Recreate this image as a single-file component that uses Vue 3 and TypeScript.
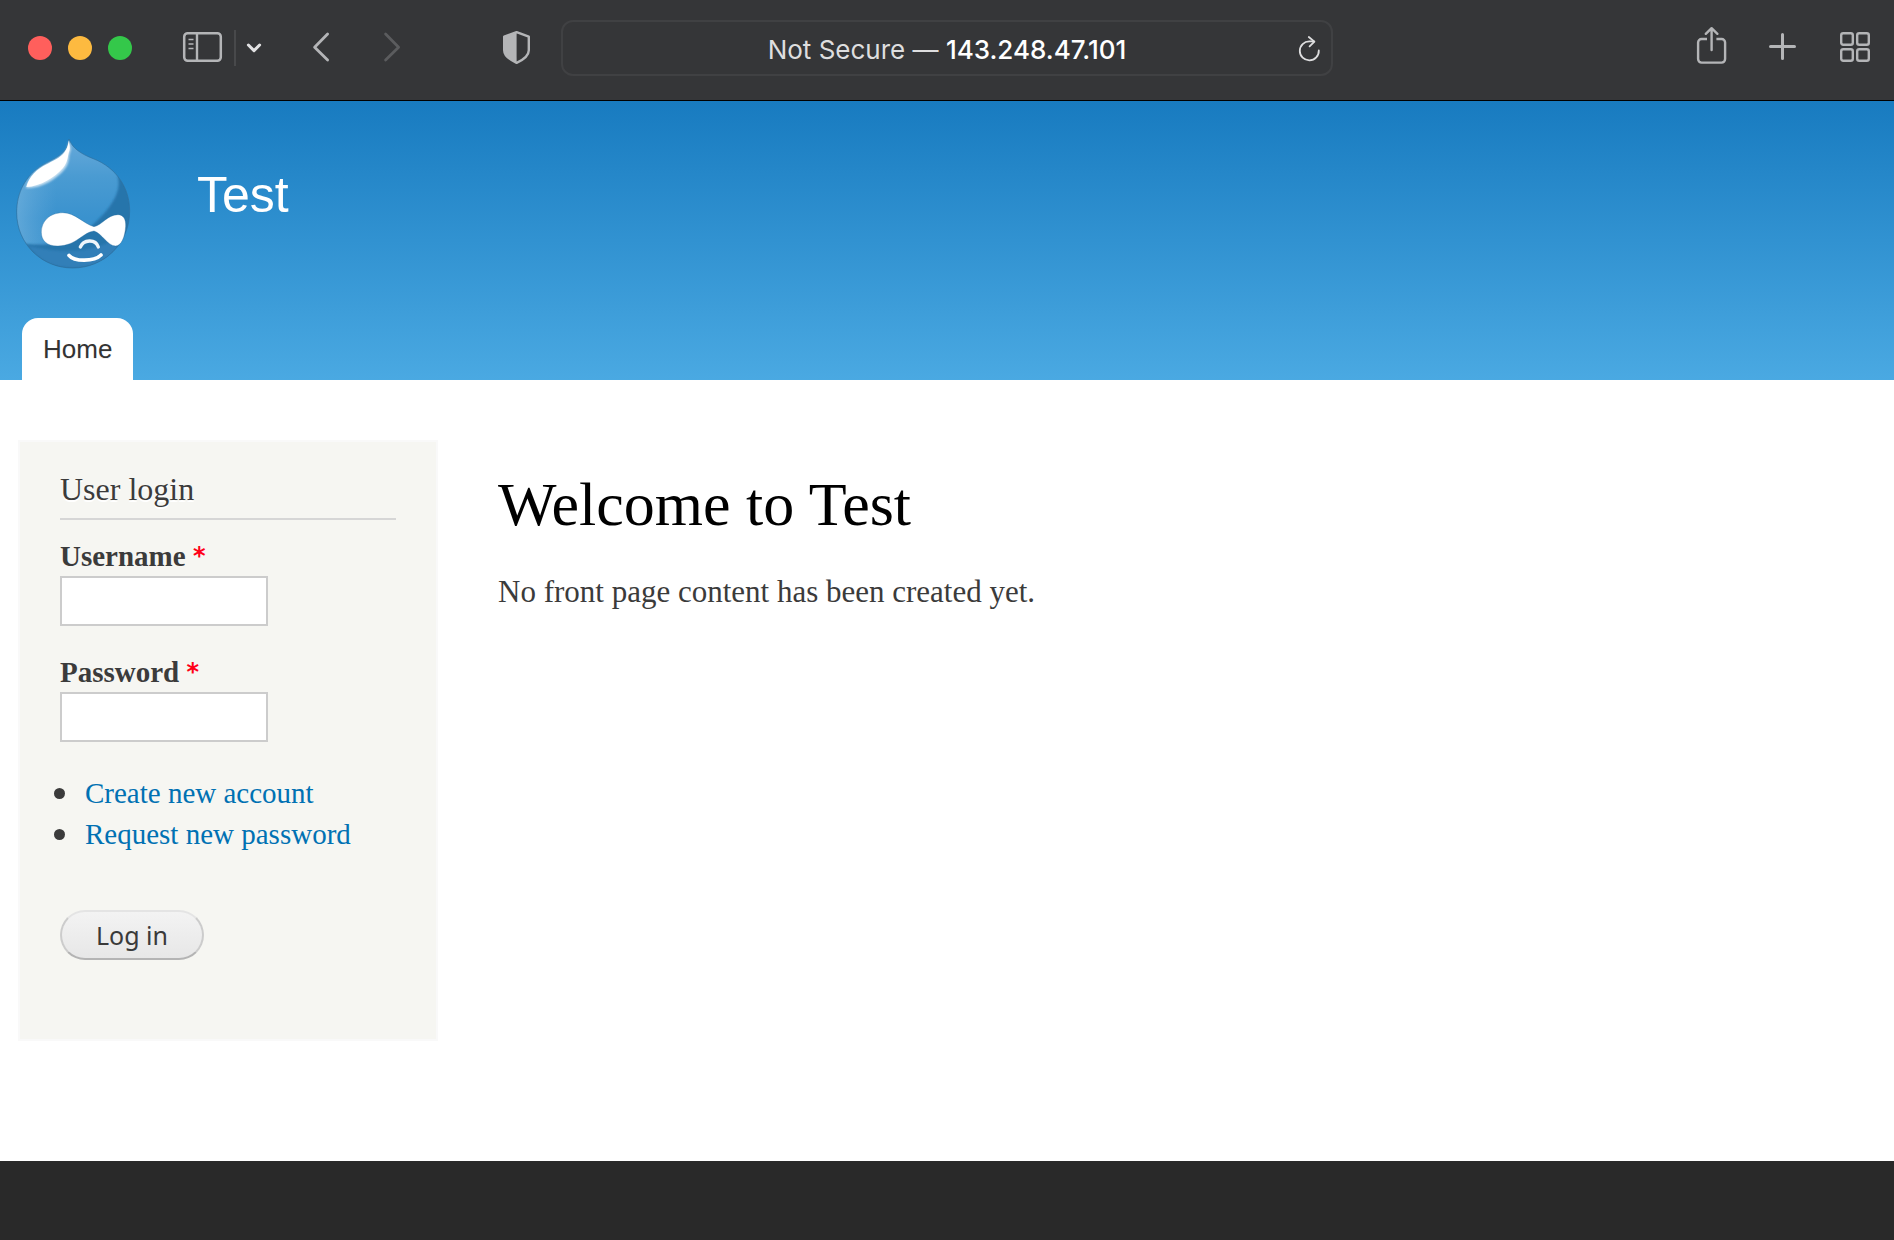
<script setup lang="ts">
import { ref } from 'vue'

interface AccountLink {
  label: string
  href: string
}

const siteName = 'Test'
const host = '143.248.47.101'
const username = ref('')
const password = ref('')

const accountLinks: AccountLink[] = [
  { label: 'Create new account', href: '#register' },
  { label: 'Request new password', href: '#password' },
]
</script>

<template>
  <div class="window">
    <div class="toolbar">
      <div class="tools tools-left">
        <div class="lights">
          <button type="button" class="light red" aria-label="Close"></button>
          <button type="button" class="light yellow" aria-label="Minimize"></button>
          <button type="button" class="light green" aria-label="Zoom"></button>
        </div>
        <button type="button" class="tool sidebar-toggle" aria-label="Show sidebar">
          <svg width="42" height="44" viewBox="0 0 42 44" fill="none" stroke="#b4b5b7">
            <rect x="2.200" y="7.200" width="36.600" height="27.600" rx="3.500" stroke-width="2.500" />
            <path d="M15 7v28" stroke-width="2.400" />
            <path d="M6.500 13.500h5M6.500 18h5M6.500 22.500h5" stroke-width="1.700" />
          </svg>
        </button>
        <span class="divider"></span>
        <button type="button" class="tool" aria-label="Tab groups">
          <svg width="20" height="44" viewBox="0 0 20 44" fill="none" stroke="#e2e2e3" stroke-width="3" stroke-linecap="round" stroke-linejoin="round">
            <path d="M4.400 19l5.600 5.600 5.600-5.600" />
          </svg>
        </button>
        <button type="button" class="tool nav" aria-label="Back">
          <svg width="24" height="44" viewBox="0 0 24 44" fill="none" stroke="#b4b5b7" stroke-width="2.800" stroke-linecap="round" stroke-linejoin="round">
            <path d="M17.600 8L4.600 21.200 17.600 34" />
          </svg>
        </button>
        <button type="button" class="tool nav" aria-label="Forward" disabled>
          <svg width="24" height="44" viewBox="0 0 24 44" fill="none" stroke="#5b5c5e" stroke-width="2.800" stroke-linecap="round" stroke-linejoin="round">
            <path d="M5.600 8l13 13.200L5.600 34" />
          </svg>
        </button>
        <button type="button" class="tool shield" aria-label="Privacy report">
          <svg width="30" height="44" viewBox="0 0 30 44">
            <path d="M15.600 6.200L27.800 10.600v13.600c0 5.400-6 9.800-12.200 12.600C9.400 34 3.200 29.600 3.200 24.200V10.600z" fill="none" stroke="#b4b5b7" stroke-width="2.400" stroke-linejoin="round" />
            <path d="M15.600 6.200L3.200 10.600v13.600c0 5.400 6.200 9.800 12.400 12.600z" fill="#b4b5b7" />
          </svg>
        </button>
      </div>

      <div class="address">
        <p class="address-text">Not Secure — <span class="host">{{ host }}</span></p>
        <button type="button" class="tool reload" aria-label="Reload">
          <svg width="26" height="44" viewBox="0 0 26 44" fill="none" stroke="#dededf" stroke-width="1.800" stroke-linecap="round" stroke-linejoin="round">
            <path d="M21.800 24.500A9.500 9.500 0 1 1 12.500 15.400h4.500" />
            <path d="M11.800 11l5.600 4.600-4.800 4.800" />
          </svg>
        </button>
      </div>

      <div class="tools tools-right">
        <button type="button" class="tool" aria-label="Share">
          <svg width="34" height="44" viewBox="0 0 34 44" fill="none" stroke="#b4b5b7" stroke-width="2.400" stroke-linecap="round" stroke-linejoin="round">
            <path d="M13 13H7.600a3.500 3.500 0 0 0-3.500 3.500v16.600a3.500 3.500 0 0 0 3.500 3.500h20a3.500 3.500 0 0 0 3.500-3.500V16.500a3.500 3.500 0 0 0-3.500-3.500H22.400" stroke-linecap="butt" />
            <path d="M17.600 24V2.500M11.800 7.800l5.800-5.600 5.800 5.600" />
          </svg>
        </button>
        <button type="button" class="tool" aria-label="New tab">
          <svg width="30" height="44" viewBox="0 0 30 44" stroke="#b4b5b7" stroke-width="3" stroke-linecap="round">
            <path d="M14.500 8.500v24M2.500 20.500h24" />
          </svg>
        </button>
        <button type="button" class="tool" aria-label="Tab overview">
          <svg width="34" height="44" viewBox="0 0 34 44" fill="none" stroke="#b4b5b7" stroke-width="2.400">
            <rect x="3.200" y="7.200" width="11.600" height="11.600" rx="2" />
            <rect x="19.200" y="7.200" width="11.600" height="11.600" rx="2" />
            <rect x="3.200" y="23.200" width="11.600" height="11.600" rx="2" />
            <rect x="19.200" y="23.200" width="11.600" height="11.600" rx="2" />
          </svg>
        </button>
      </div>
    </div>

    <header class="header">
      <div class="branding">
        <svg class="logo" width="120" height="136" viewBox="42 33 360 408" role="img" aria-label="Home">
          <defs>
            <linearGradient id="dropFill" x1="0" y1="0" x2="0" y2="1">
              <stop offset="0" stop-color="#6aabdb" />
              <stop offset="0.300" stop-color="#4a9bd2" />
              <stop offset="0.600" stop-color="#3a92ce" />
              <stop offset="1" stop-color="#4196cf" />
            </linearGradient>
            <linearGradient id="leftGlow" x1="0" y1="0" x2="1" y2="0">
              <stop offset="0" stop-color="#7db8e0" stop-opacity="0.600" />
              <stop offset="0.350" stop-color="#6fb0de" stop-opacity="0" />
            </linearGradient>
            <clipPath id="dropShape">
              <path d="M207 42C216 68 240 86 282 102C348 128 389 188 389 258C389 356 312 429 218 429C124 429 50 356 50 262C50 204 76 150 130 119C168 97 202 88 207 42Z" />
            </clipPath>
            <filter id="soften" x="-20%" y="-20%" width="140%" height="140%">
              <feGaussianBlur stdDeviation="3" />
            </filter>
          </defs>
          <g clip-path="url(#dropShape)">
            <path d="M42 33h360v408H42z" fill="url(#dropFill)" />
            <path d="M42 33h360v408H42z" fill="url(#leftGlow)" />
            <path d="M352 150C364 190 346 228 306 272C266 314 220 350 150 357C115 360 90 359 66 354L100 441H402V180Z" fill="#2874ab" filter="url(#soften)" />
            <path d="M85 362C180 385 260 384 330 350L360 370C330 410 270 428 215 428C150 428 110 400 85 362Z" fill="#337fb8" filter="url(#soften)" />
          </g>
          <path d="M207 42C216 68 240 86 282 102C348 128 389 188 389 258C389 356 312 429 218 429C124 429 50 356 50 262C50 204 76 150 130 119C168 97 202 88 207 42Z" fill="none" stroke="#2b6b98" stroke-opacity="0.600" stroke-width="3" />
          <path d="M206 50C212 62 214 72 210 82C204 96 210 112 194 132C170 162 126 190 78 189C88 154 112 132 140 118C174 100 202 90 206 50Z" fill="#ffffff" fill-opacity="0.700" filter="url(#soften)" />
          <path d="M206 46C209 60 211 70 208 78C202 92 206 108 189 129C164 158 122 184 79 186C87 153 112 132 140 118C174 100 202 90 206 46Z" fill="#ffffff" />
          <path d="M188 263C226 263 250 296 282 305C306 301 322 269 354 269C371 269 378 284 377 304C375 336 364 363 347 363C322 363 306 325 282 318C248 322 230 362 174 363C140 364 124 346 124 322C124 288 150 263 188 263Z" fill="#ffffff" stroke="#246a9d" stroke-opacity="0.500" stroke-width="2" />
          <path d="M241 366C250 344 286 340 295 366" fill="none" stroke="#eef6fb" stroke-width="10" stroke-linecap="round" />
          <path d="M207 391C222 410 282 411 303 390" fill="none" stroke="#ffffff" stroke-width="11" stroke-linecap="round" />
        </svg>
        <p class="site-name"><a href="#home">{{ siteName }}</a></p>
      </div>
      <nav class="menu" aria-label="Main menu">
        <a class="tab" href="#home">Home</a>
      </nav>
    </header>

    <div class="content">
      <aside class="panel">
        <h2 class="panel-title">User login</h2>
        <form @submit.prevent>
          <div class="field">
            <label for="username">Username <span class="required">*</span></label>
            <input id="username" v-model="username" type="text" />
          </div>
          <div class="field">
            <label for="password">Password <span class="required">*</span></label>
            <input id="password" v-model="password" type="password" />
          </div>
          <ul class="links">
            <li v-for="link in accountLinks" :key="link.href">
              <a :href="link.href">{{ link.label }}</a>
            </li>
          </ul>
          <button class="submit" type="submit">Log in</button>
        </form>
      </aside>
      <main class="main">
        <h1>Welcome to {{ siteName }}</h1>
        <p>No front page content has been created yet.</p>
      </main>
    </div>

    <footer class="footer"></footer>
  </div>
</template>

<style>
body {
  margin: 0;
  background: #ffffff;
}
</style>

<style scoped>
.window {
  display: flex;
  flex-direction: column;
  min-height: 100vh;
  color: #3b3b3b;
  font-family: "Liberation Serif", serif;
}

p,
h1,
h2,
ul {
  margin: 0;
  padding: 0;
  font-weight: 400;
}

a {
  text-decoration: none;
}

/* Browser toolbar */
.toolbar {
  display: grid;
  grid-template-columns: 1fr minmax(0, 772px) 1fr;
  align-items: center;
  box-sizing: border-box;
  height: 101px;
  padding-bottom: 4px;
  border-bottom: 1px solid #000000;
  background: #353638;
}

.tools {
  display: flex;
  align-items: center;
}

.tools-left {
  padding: 0 30px 0 28px;
}

.tools-right {
  justify-content: flex-end;
  gap: 40px;
  padding-right: 22px;
}

.lights {
  display: flex;
  gap: 16px;
}

.light {
  width: 24px;
  height: 24px;
  padding: 0;
  border: 0;
  border-radius: 50%;
}

.red {
  background: #ff5f5c;
}

.yellow {
  background: #fdba40;
}

.green {
  background: #34c84a;
}

.tool {
  display: block;
  flex: none;
  padding: 0;
  border: 0;
  background: none;
}

.tool svg {
  display: block;
}

.sidebar-toggle {
  margin-left: 50px;
}

.divider {
  width: 2px;
  height: 36px;
  margin: 0 8px 0 10px;
  background: #48494b;
}

.nav {
  margin-left: 46px;
}

.shield {
  margin-left: auto;
}

.address {
  display: flex;
  align-items: center;
  box-sizing: border-box;
  height: 56px;
  padding: 0 8px 0 34px;
  border: 2px solid #404143;
  border-radius: 12px;
}

.address-text {
  flex: 1;
  padding-top: 3px;
  color: #dededf;
  font-family: Inter, sans-serif;
  font-size: 26px;
  line-height: 32px;
  text-align: center;
  white-space: nowrap;
}

.host {
  color: #ffffff;
  font-weight: 500;
}

/* Site header */
.header {
  display: flex;
  flex-direction: column;
  gap: 46px;
  padding-top: 35px;
  background: linear-gradient(#187bc0, #4aa9e2);
}

.branding {
  display: flex;
  align-items: flex-start;
  gap: 63px;
  padding-left: 14px;
}

.logo {
  display: block;
}

.site-name {
  margin-top: 29px;
  font-family: "Liberation Sans", sans-serif;
  font-size: 50px;
  line-height: 60px;
}

.site-name a {
  color: #ffffff;
}

.menu {
  display: flex;
  padding-left: 22px;
}

.tab {
  padding: 0 21px;
  border-radius: 16px 16px 0 0;
  background: #ffffff;
  color: #333333;
  font-family: "Liberation Sans", sans-serif;
  font-size: 26px;
  line-height: 62px;
  text-shadow: 0 1px #eeeeee;
}

/* Page body */
.content {
  display: flex;
  align-items: flex-start;
  gap: 60px;
  padding: 60px 18px 120px;
}

.panel {
  flex: none;
  box-sizing: border-box;
  width: 420px;
  padding: 27px 40px 79px;
  border: 2px solid #f9f9f9;
  background: #f6f6f2;
}

.panel-title {
  padding-bottom: 9px;
  border-bottom: 2px solid #d6d6d6;
  font-size: 32px;
  line-height: 40px;
  text-shadow: 0 2px #ffffff;
}

.field {
  margin-top: 16px;
}

.field + .field {
  margin-top: 26px;
}

.field label {
  display: block;
  height: 40px;
  font-size: 29px;
  font-weight: 700;
  line-height: 40px;
}

.required {
  color: #ff0018;
  font-family: "DejaVu Sans", sans-serif;
  font-size: 24px;
  line-height: 20px;
  vertical-align: 2px;
}

.field input {
  display: block;
  box-sizing: border-box;
  width: 208px;
  height: 50px;
  padding: 4px;
  border: 2px solid #cccccc;
  background: #ffffff;
  font-size: 24px;
}

.links {
  margin: 31px 0 55px -6px;
  list-style: none;
}

.links li {
  display: flex;
  align-items: center;
  gap: 20px;
  font-size: 29px;
  line-height: 41px;
}

.links li::before {
  width: 11px;
  height: 11px;
  border-radius: 50%;
  background: #3b3b3b;
  content: "";
}

.links a {
  color: #0071b3;
}

.submit {
  display: block;
  box-sizing: border-box;
  height: 50px;
  padding: 0 34px;
  border: 2px solid #cccccc;
  border-top-color: #e4e4e4;
  border-bottom-color: #b4b4b4;
  border-radius: 25px;
  background: linear-gradient(#f3f3f3, #e7e7e7);
  color: #3a3a3a;
  font-family: "Noto Sans", sans-serif;
  font-size: 25px;
  line-height: 44px;
}

.main {
  flex: 1;
  padding-top: 32px;
}

.main h1 {
  margin-bottom: 35px;
  color: #000000;
  font-size: 62px;
  line-height: 64px;
}

.main p {
  font-size: 31px;
  line-height: 42px;
}

.footer {
  flex: 1;
  background: #292929;
}
</style>
